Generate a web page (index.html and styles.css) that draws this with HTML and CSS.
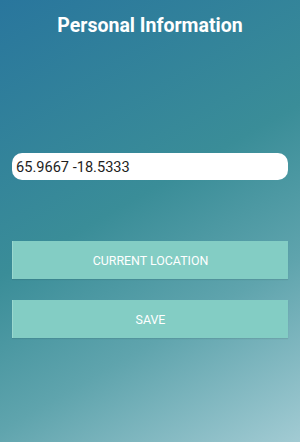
FILE: index.html
```html
<!DOCTYPE html>
<html lang="en">
<head>
  <meta charset="UTF-8" />
  <meta name="viewport" content="width=device-width, initial-scale=1.0" />
  <title>Personal Information</title>
  <link rel="stylesheet" href="styles.css">
</head>
<body>
  <div class="screen">
    <h1 class="title">Personal Information</h1>

    <form class="info-form">
      <input type="text" class="coords" value="65.9667 -18.5333" />
      <button type="button" class="action location">CURRENT LOCATION</button>
      <button type="button" class="action save">SAVE</button>
    </form>
  </div>
</body>
</html>
```

FILE: styles.css
```css
html, body {
  margin: 0;
  padding: 0;
}
body {
  font-family: Roboto, 'Noto Sans', sans-serif;
}
.screen {
  height: 442px;
  box-sizing: border-box;
  padding: 0 12px;
  background: linear-gradient(150deg, #29769d 0%, #3a8d98 45%, #5fa4ad 70%, #a2cbd3 100%);
  overflow: hidden;
}
.title {
  margin: 0;
  padding-top: 14px;
  height: 24px;
  line-height: 24px;
  font-size: 19.5px;
  font-weight: bold;
  color: #fff;
  text-align: center;
}
.info-form {
  display: flex;
  flex-direction: column;
  padding-top: 115px;
}
.coords {
  height: 27px;
  padding: 0 4px;
  font-family: Roboto, sans-serif;
  font-size: 14.6px;
  color: #1e1e1e;
  background: #fff;
  border: none;
  border-radius: 10px;
  box-sizing: border-box;
  outline: none;
}
.action {
  height: 38px;
  font-family: Roboto, sans-serif;
  font-size: 12.4px;
  color: #fff;
  background-color: #83cdc4;
  border: none;
  border-left: 1px solid #9ad8cf;
  border-radius: 0;
  box-shadow: 0 1px 1px rgba(0, 0, 0, 0.08);
  cursor: pointer;
}
.location {
  margin-top: 61px;
}
.save {
  margin-top: 21px;
}
```
